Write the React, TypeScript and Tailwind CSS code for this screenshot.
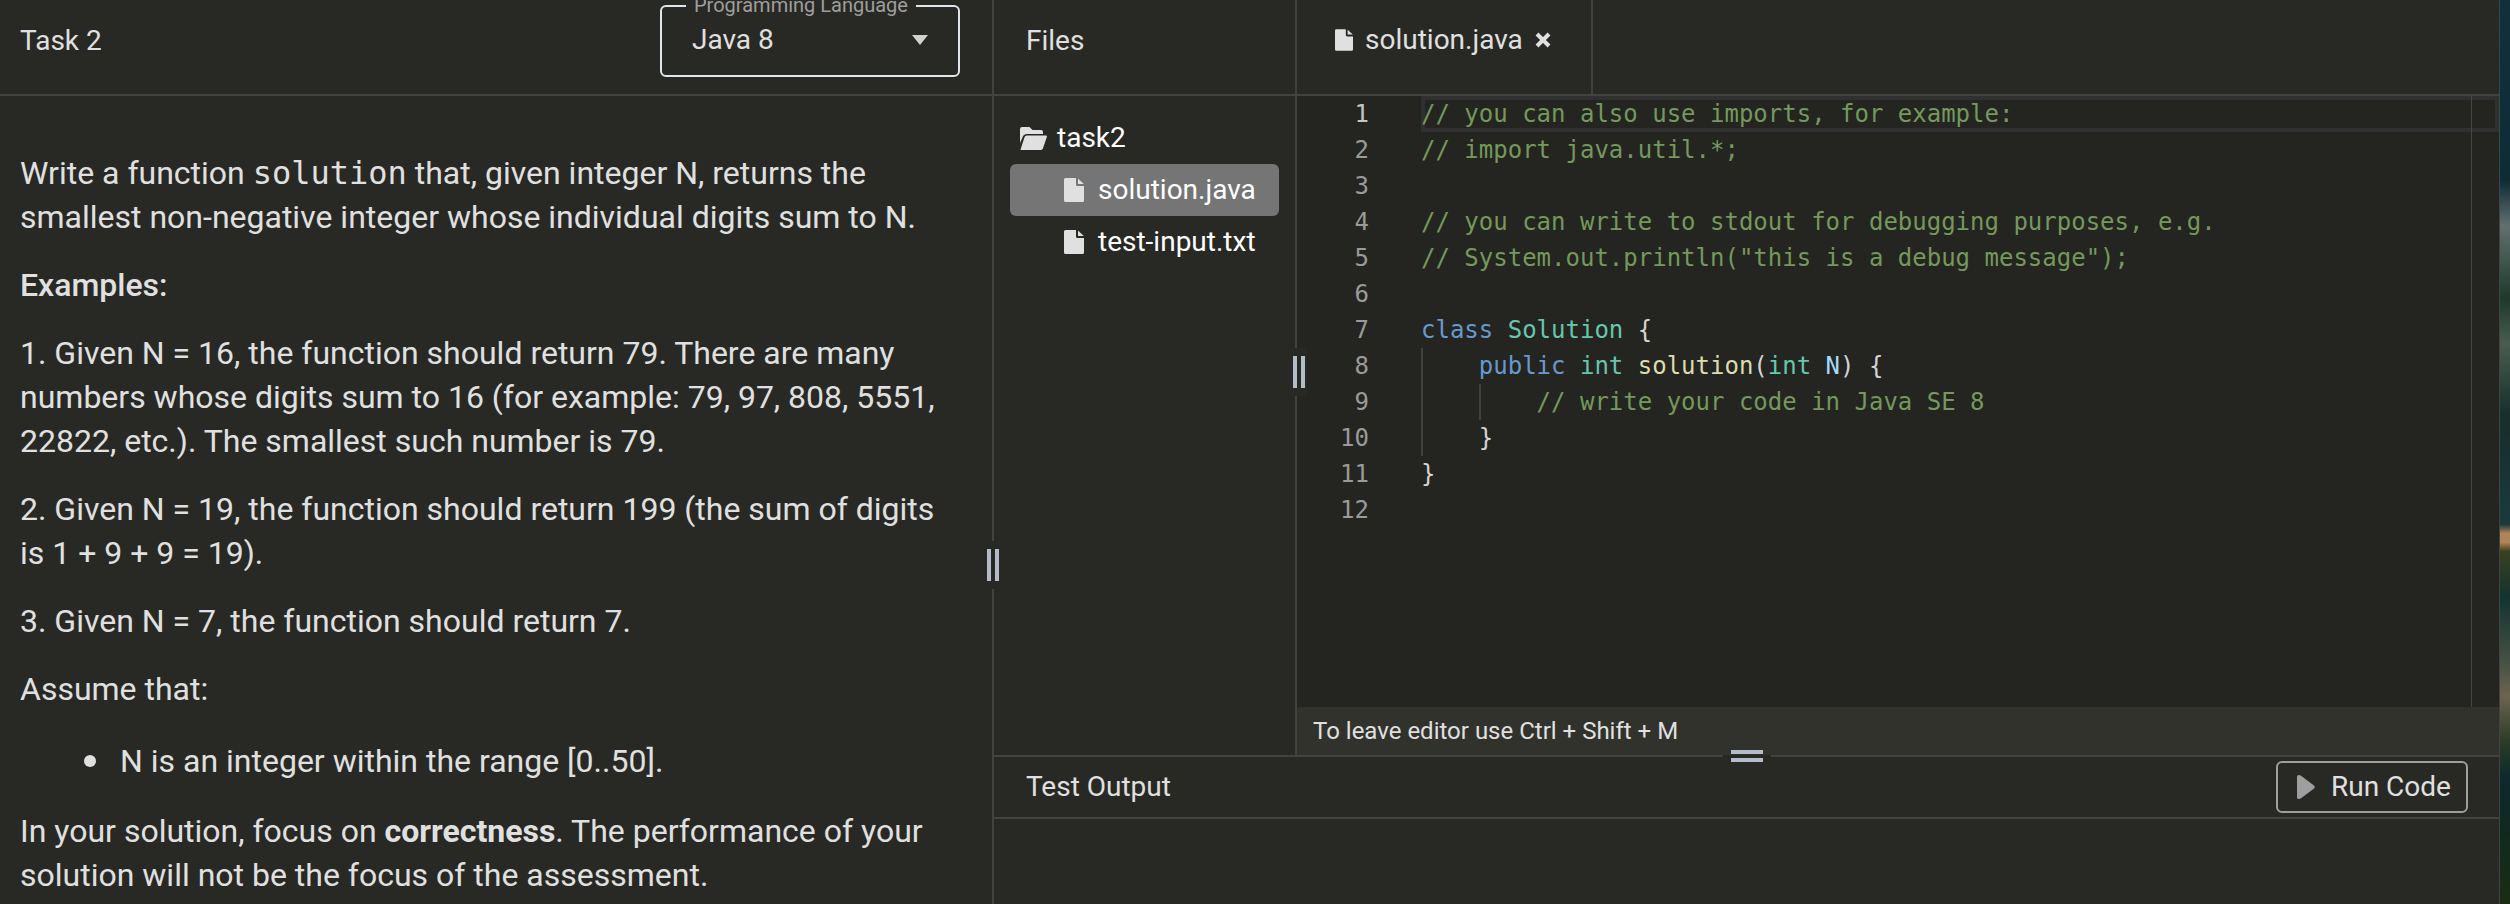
import React from "react";

const COMMENT = "text-[#74985d]";
const KEYWORD = "text-[#6799cf]";
const TYPE = "text-[#67c7ae]";
const FUNC = "text-[#dcdcaf]";
const PARAM = "text-[#a5dafa]";
const PLAIN = "text-[#d4d4d4]";

type Token = [string, string];

const lines: Token[][] = [
  [[COMMENT, "// you can also use imports, for example:"]],
  [[COMMENT, "// import java.util.*;"]],
  [],
  [[COMMENT, "// you can write to stdout for debugging purposes, e.g."]],
  [[COMMENT, '// System.out.println("this is a debug message");']],
  [],
  [
    [KEYWORD, "class "],
    [TYPE, "Solution "],
    [PLAIN, "{"],
  ],
  [
    [PLAIN, "    "],
    [KEYWORD, "public "],
    [TYPE, "int "],
    [FUNC, "solution"],
    [PLAIN, "("],
    [TYPE, "int "],
    [PARAM, "N"],
    [PLAIN, ") {"],
  ],
  [[COMMENT, "        // write your code in Java SE 8"]],
  [[PLAIN, "    }"]],
  [[PLAIN, "}"]],
  [],
];

const FileIcon = ({ className }: { className: string }) => (
  <svg viewBox="0 0 20 24" fill="#e0e0e0" className={className}>
    <path d="M1.5 0H12v6.5q0 1.500 1.500 1.500H20v14.500q0 1.500-1.500 1.500h-17Q0 24 0 22.500v-21Q0 0 1.500 0z" />
    <path d="M14 0.500L19.800 6H14z" />
  </svg>
);

const FolderIcon = () => (
  <svg viewBox="0 0 27 23" fill="#e0e0e0" className="h-[23px] w-[27px]">
    <path d="M2 0h7.500l3 3H21a2 2 0 0 1 2 2v2H7a4.500 4.500 0 0 0-4.200 2.800L0 16V2a2 2 0 0 1 2-2z" />
    <path d="M6.800 8.500H26a1 1 0 0 1 .9 1.300l-4 11.700a2 2 0 0 1-1.900 1.500H1.500a.8.8 0 0 1-.8-1.100l3.800-11.600a2.500 2.500 0 0 1 2.300-1.800z" />
  </svg>
);

const VerticalGrip = ({ className }: { className: string }) => (
  <div
    className={`absolute z-10 flex h-12 w-4 items-center justify-center gap-1 bg-[#282924] ${className}`}
  >
    <span className="h-8 w-1 bg-[#b4bcc8]" />
    <span className="h-8 w-1 bg-[#b4bcc8]" />
  </div>
);

const TaskPanel = () => (
  <section className="relative flex w-[994px] shrink-0 flex-col border-r-2 border-[#424242]">
    <header className="flex h-24 shrink-0 items-start justify-between border-b-2 border-[#424242] pl-5 pr-8">
      <h1 className="pt-[21px] text-[28px] leading-10">Task 2</h1>
      <div className="relative mt-[5px] h-[72px] w-[300px] rounded-md border-2 border-[#dfe5ec]">
        <label
          htmlFor="language"
          className="absolute -top-4 left-6 bg-[#282924] px-2 text-xl leading-7 text-[#9e9e9e]"
        >
          Programming Language
        </label>
        <select
          id="language"
          className="h-full w-full appearance-none bg-transparent pb-0.5 pl-[30px] text-[28px] outline-none"
        >
          <option>Java 8</option>
        </select>
        <svg
          viewBox="0 0 16 10"
          fill="#d0d0d0"
          className="pointer-events-none absolute right-[30px] top-7 h-[10px] w-4"
        >
          <path d="M0 0h16L8 10z" />
        </svg>
      </div>
    </header>
    <div className="flex flex-col gap-6 pl-5 pr-8 pt-[55px] text-[32px] leading-[44px]">
      <p>
        Write a function{" "}
        <code className="font-['DejaVu_Sans_Mono',monospace]">solution</code>{" "}
        that, given integer N, returns the smallest non-negative integer whose
        individual digits sum to N.
      </p>
      <p className="font-medium">Examples:</p>
      <p>
        1. Given N = 16, the function should return 79. There are many numbers
        whose digits sum to 16 (for example: 79, 97, 808, 5551, 22822, etc.).
        The smallest such number is 79.
      </p>
      <p>
        2. Given N = 19, the function should return 199 (the sum of digits is 1
        + 9 + 9 = 19).
      </p>
      <p>3. Given N = 7, the function should return 7.</p>
      <p>Assume that:</p>
      <ul className="pb-0.5 pl-16 pt-1">
        <li className="flex items-center gap-6">
          <span className="size-3 rounded-full bg-[#e0e0e0]" />N is an integer
          within the range [0..50].
        </li>
      </ul>
      <p>
        In your solution, focus on <b>correctness</b>. The performance of your
        solution will not be the focus of the assessment.
      </p>
    </div>
    <VerticalGrip className="-right-[9px] top-[541px]" />
  </section>
);

const FilesPanel = () => (
  <section className="relative flex w-[303px] shrink-0 flex-col border-r-2 border-[#424242]">
    <h2 className="h-24 shrink-0 border-b-2 border-[#424242] pl-8 pt-[21px] text-[28px] leading-10">
      Files
    </h2>
    <div className="px-4 pt-4 text-[28px] text-white">
      <div className="flex h-[52px] items-center gap-2.5 pl-[10px]">
        <FolderIcon />
        task2
      </div>
      <button className="flex h-[52px] w-full items-center gap-3.5 rounded-md bg-[#757575] pl-[54px]">
        <FileIcon className="h-6 w-5" />
        solution.java
      </button>
      <button className="flex h-[52px] w-full items-center gap-3.5 pl-[54px]">
        <FileIcon className="h-6 w-5" />
        test-input.txt
      </button>
    </div>
    <VerticalGrip className="-right-[12px] top-[348px]" />
  </section>
);

const Editor = () => (
  <section className="flex min-w-0 grow flex-col">
    <div className="flex h-24 shrink-0 border-b-2 border-[#424242]">
      <div className="flex w-[296px] items-start border-r-2 border-[#424242] pl-[38px] pt-5 text-[28px] leading-10">
        <FileIcon className="mr-3 mt-[9px] h-[22px] w-[18px]" />
        solution.java
        <button aria-label="Close" className="ml-3 mt-3">
          <svg
            viewBox="0 0 16 16"
            stroke="#e0e0e0"
            strokeWidth="4"
            className="h-4 w-4"
          >
            <path d="M2 2l12 12M14 2L2 14" />
          </svg>
        </button>
      </div>
    </div>
    <div className="relative flex grow bg-[#242520] font-['DejaVu_Sans_Mono',monospace] text-2xl leading-9">
      <div className="w-[124px] shrink-0 pr-[52px] text-right text-[#9a9a9a]">
        {lines.map((_, i) => (
          <div key={i} className={i === 0 ? "text-[#c6c6c6]" : ""}>
            {i + 1}
          </div>
        ))}
      </div>
      <div className="relative grow">
        <div className="absolute inset-x-0 top-0 h-9 border-4 border-[#303031]" />
        <div className="absolute left-0 top-[252px] h-[108px] w-0.5 bg-[#404040]" />
        <div className="absolute left-[58px] top-[288px] h-9 w-0.5 bg-[#404040]" />
        <pre className="relative font-['DejaVu_Sans_Mono',monospace]">
          {lines.map((tokens, i) => (
            <div key={i} className="h-9">
              {tokens.map(([color, text], j) => (
                <span key={j} className={color}>
                  {text}
                </span>
              ))}
            </div>
          ))}
        </pre>
      </div>
      <div className="absolute inset-y-0 right-[27px] w-px bg-[#464743]" />
    </div>
    <p className="h-12 shrink-0 bg-[#31322c] px-4 text-2xl leading-[48px]">
      To leave editor use Ctrl + Shift + M
    </p>
  </section>
);

const TestOutput = () => (
  <section className="relative h-[149px] shrink-0 border-t-2 border-[#424242]">
    <div className="absolute -top-[9px] left-1/2 z-10 flex h-4 w-12 -translate-x-1/2 flex-col items-center justify-center gap-1">
      <span className="absolute inset-x-0 top-[7px] h-0.5 bg-[#282924]" />
      <span className="relative h-1 w-8 bg-[#b4bcc8]" />
      <span className="relative h-1 w-8 bg-[#b4bcc8]" />
    </div>
    <div className="flex h-[62px] items-center justify-between border-b-2 border-[#424242] pl-8 pr-[31px]">
      <h2 className="text-[28px]">Test Output</h2>
      <button className="flex h-[52px] w-48 items-center gap-4 rounded-md border-2 border-[#9e9e9e] pl-[19px] text-[28px]">
        <svg viewBox="0 0 18 24" fill="#9e9e9e" className="h-6 w-[18px]">
          <path d="M0 1.500Q0 0 2 0Q3 0 4 .8L17 10.500Q18.500 12 17 13.500L4 23.200Q3 24 2 24Q0 24 0 22.500z" />
        </svg>
        Run Code
      </button>
    </div>
  </section>
);

export default function App() {
  return (
    <div className="flex h-screen overflow-hidden bg-[#282924] font-[Roboto,sans-serif] text-[#e0e0e0]">
      <TaskPanel />
      <main className="flex min-w-0 grow flex-col border-r border-[#424242]">
        <div className="flex min-h-0 grow">
          <FilesPanel />
          <Editor />
        </div>
        <TestOutput />
      </main>
      {/* strip of desktop wallpaper */}
      <div className="w-[10px] shrink-0 bg-[linear-gradient(to_bottom,#12303c_0%,#0d2c36_20%,#62706e_25%,#1c3a2c_33%,#4a5c50_38%,#152f2a_46%,#1a3a3c_58%,#b08458_59%,#b08458_60%,#3a4020_61%,#123430_66%,#445044_73%,#6c6450_77%,#2c3c28_82%,#0c2a2c_86%,#0e2a20_92%,#1c2c14_100%)]" />
    </div>
  );
}
